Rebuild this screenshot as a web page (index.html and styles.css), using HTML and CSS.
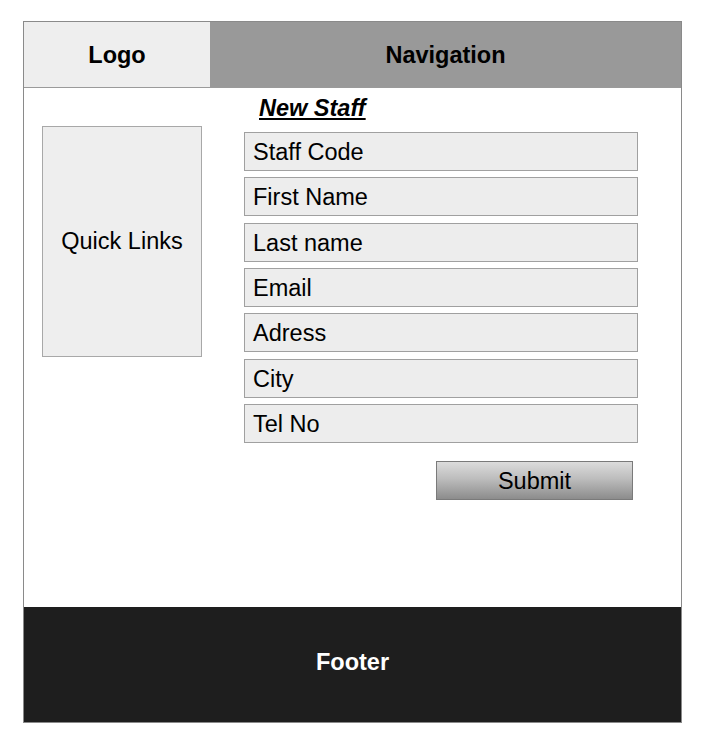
FILE: index.html
```html
<!DOCTYPE html>
<html>
<head>
<meta charset="utf-8">
<link rel="stylesheet" href="styles.css">
</head>
<body>
<div class="frame">
  <header class="header">
    <div class="logo">Logo</div>
    <nav class="nav">Navigation</nav>
  </header>
  <main class="main">
    <aside class="quick">Quick Links</aside>
    <section class="form">
      <h1 class="title">New Staff</h1>
      <div class="fields">
        <div class="field">Staff Code</div>
        <div class="field">First Name</div>
        <div class="field">Last name</div>
        <div class="field">Email</div>
        <div class="field">Adress</div>
        <div class="field">City</div>
        <div class="field">Tel No</div>
      </div>
      <div class="actions"><div class="submit">Submit</div></div>
    </section>
  </main>
  <footer class="footer">Footer</footer>
</div>
</body>
</html>
```
FILE: styles.css
```css
* { box-sizing: border-box; }
html, body { margin: 0; padding: 0; background: #fff; }
body {
  font-family: "Liberation Sans", Arial, sans-serif;
  color: #000;
  padding: 21px 0 0 23px;
}
.frame {
  width: 659px;
  border: 1px solid #8a8a8a;
}
.header {
  display: flex;
  height: 66px;
  border-bottom: 1px solid #9a9a9a;
  font-weight: bold;
  font-size: 23.5px;
}
.logo {
  width: 186px;
  background: #eeeeee;
  display: flex;
  align-items: center;
  justify-content: center;
  padding-top: 2px;
}
.nav {
  flex: 1;
  background: #999999;
  display: flex;
  align-items: center;
  justify-content: center;
  padding-top: 2px;
}
.main {
  height: 519px;
  display: flex;
  align-items: flex-start;
  padding: 0 0 0 18px;
  background: #fff;
}
.quick {
  margin-top: 38px;
  width: 160px;
  height: 231px;
  background: #eeeeee;
  border: 1px solid #a8a8a8;
  display: flex;
  align-items: center;
  justify-content: center;
  font-size: 23.5px;
}
.form {
  margin-left: 42px;
  width: 394px;
}
.title {
  margin: 5px 0 0 15px;
  font-size: 23.5px;
  font-style: italic;
  font-weight: bold;
  text-decoration: underline;
  line-height: 30px;
  height: 39px;
}
.fields {
  display: flex;
  flex-direction: column;
  gap: 6.33px;
}
.field {
  height: 39px;
  background: #ededed;
  border: 1px solid #a0a0a0;
  display: flex;
  align-items: center;
  padding: 2px 0 0 8px;
  font-size: 23.5px;
}
.actions {
  display: flex;
  justify-content: flex-end;
  padding-right: 5px;
  margin-top: 18px;
}
.submit {
  width: 197px;
  height: 39px;
  background: linear-gradient(#dcdcdc, #bdbdbd 45%, #8c8c8c);
  border: 1px solid #7a7a7a;
  display: flex;
  align-items: center;
  justify-content: center;
  font-size: 23.5px;
  padding-top: 2px;
}
.footer {
  height: 115px;
  background: #1e1e1e;
  color: #fff;
  font-weight: bold;
  font-size: 23.5px;
  display: flex;
  align-items: center;
  justify-content: center;
  padding-bottom: 4px;
}
```
